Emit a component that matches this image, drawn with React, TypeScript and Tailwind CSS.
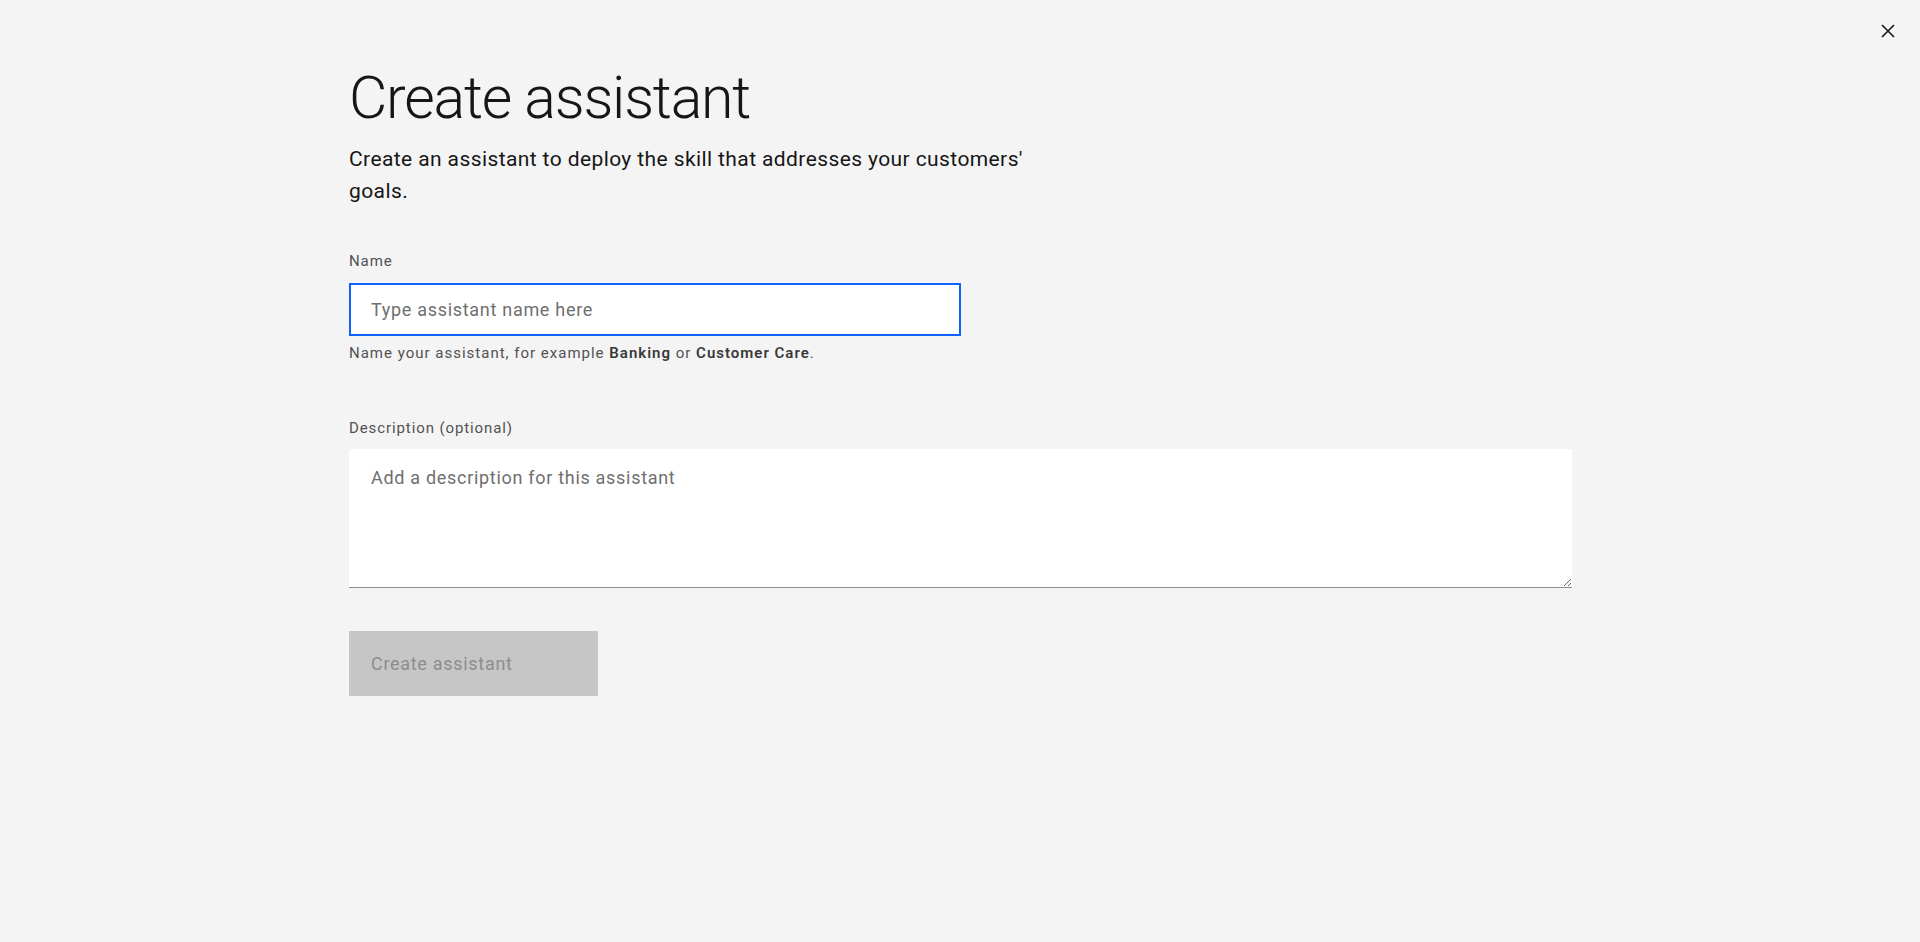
import React from "react";

export default function App() {
  return (
    <div
      className="relative w-full h-[942px] bg-[#f4f4f4] text-[#161616]"
      style={{ fontFamily: "Roboto, 'Liberation Sans', sans-serif" }}
    >
      <button className="absolute top-[19px] right-[20px] w-6 h-6 flex items-center justify-center text-[#161616]">
        <svg width="16" height="16" viewBox="0 0 16 16" fill="none" stroke="currentColor" strokeWidth="1.6">
          <path d="M2 2 L14 14 M14 2 L2 14" />
        </svg>
      </button>

      <div className="pl-[349px] pt-[62px]">
        <h1 className="text-[59px] leading-[72px] font-light tracking-[-1.2px]">Create assistant</h1>
        <p className="mt-[9px] max-w-[700px] text-[21px] leading-[32px] tracking-[0.4px]">
          Create an assistant to deploy the skill that addresses your customers' goals.
        </p>

        <div className="mt-[45px] w-[612px]">
          <label className="block text-[15px] leading-[18px] tracking-[0.9px] text-[#525252]">Name</label>
          <input
            className="mt-[13px] w-full h-[53px] bg-white border-2 border-[#0f62fe] px-[20px] text-[18px] tracking-[0.7px] placeholder:text-[#6f6f6f] outline-none"
            placeholder="Type assistant name here"
          />
          <div className="mt-[8px] text-[15px] leading-[18px] tracking-[1px] text-[#525252] whitespace-nowrap">
            Name your assistant, for example <span className="font-semibold text-[#393939]">Banking</span> or{" "}
            <span className="font-semibold text-[#393939]">Customer Care</span>.
          </div>
        </div>

        <div className="mt-[57px] w-[1223px]">
          <label className="block text-[15px] leading-[18px] tracking-[0.9px] text-[#525252]">Description (optional)</label>
          <textarea
            className="mt-[12px] block w-full h-[139px] bg-white border-b border-[#8d8d8d] px-[22px] pt-[17px] pb-[12px] text-[18px] leading-[24px] tracking-[0.7px] placeholder:text-[#6f6f6f] outline-none resize-y"
            placeholder="Add a description for this assistant"
          />
        </div>

        <button
          disabled
          className="mt-[43px] w-[249px] h-[65px] bg-[#c6c6c6] text-left pl-[22px] text-[18px] tracking-[0.7px] text-[#8d8d8d]"
        >
          Create assistant
        </button>
      </div>
    </div>
  );
}
